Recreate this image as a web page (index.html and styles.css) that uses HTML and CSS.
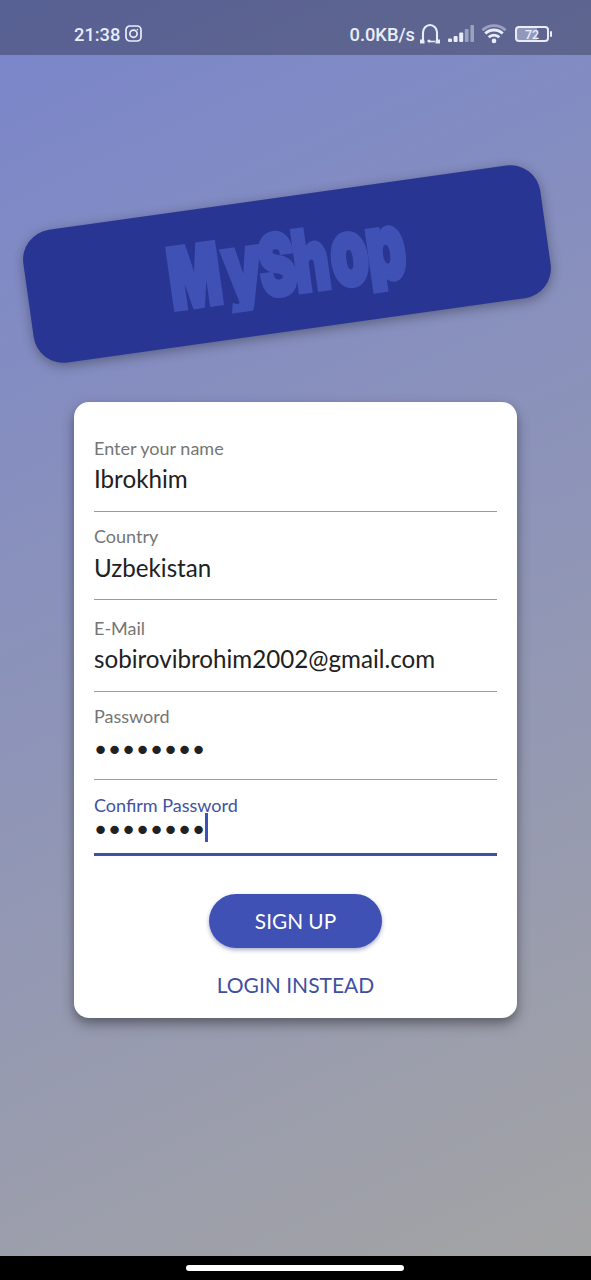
FILE: index.html
```html
<!DOCTYPE html>
<html lang="en">
<head>
<meta charset="utf-8">
<title>MyShop</title>
<link rel="stylesheet" href="styles.css">
</head>
<body>
<div class="screen">
  <header class="status">
    <div class="status-left">
      <span class="clock">21:38</span>
      <svg class="insta" width="17" height="17" viewBox="0 0 17 17" fill="none" stroke="#e9ecfb" stroke-width="1.700"><rect x="1" y="1" width="15" height="15" rx="4"/><circle cx="8.500" cy="8.700" r="3.600"/><circle cx="12.400" cy="4.600" r=".8" fill="#e9ecfb" stroke="none"/></svg>
    </div>
    <div class="status-right">
      <span class="speed">0.0KB/s</span>
      <svg class="phones" width="22" height="22" viewBox="0 0 22 22" fill="none" stroke="#e9ecfb" stroke-width="2.100"><path d="M4 18.500V9.500a7 7.500 0 0 1 14 0V18.500"/><path d="M2.500 16.500v2.500h3M19.500 16.500v2.500h-3" stroke-width="3"/><path d="M10 18.500h6" stroke-width="1.500"/><circle cx="10" cy="18" r="1.600" fill="#e9ecfb" stroke="none"/></svg>
      <svg class="signal" width="27" height="18" viewBox="0 0 27 18" fill="#e9ecfb"><rect x="0" y="13.500" width="4" height="3.500" rx="1"/><rect x="5.600" y="11" width="4" height="6" rx="1"/><rect x="11.200" y="7.500" width="4" height="9.500" rx="1"/><rect x="16.800" y="4" width="3.800" height="13" rx="1" opacity=".45"/><rect x="22.400" y="0" width="3.600" height="17" rx="1" opacity=".45"/></svg>
      <svg class="wifi" width="26" height="20" viewBox="0 0 26 20" fill="none" stroke="#e9ecfb" stroke-width="2.900"><path d="M1.500 6.300a16.500 16.500 0 0 1 23 0" opacity=".45"/><path d="M4.300 9.500a12.500 12.500 0 0 1 17.400 0"/><path d="M7.700 13.200a7.700 7.700 0 0 1 10.600 0"/><circle cx="13" cy="16.900" r="2.300" fill="#e9ecfb" stroke="none"/></svg>
      <div class="battery"><span class="level">72</span></div>
    </div>
  </header>
  <main class="auth">
    <div class="banner">
      <svg class="logo" width="240" height="90" viewBox="0 0 240 90">
        <defs><clipPath id="cut"><rect x="-5" y="0" width="250" height="86.500"/></clipPath></defs>
        <g clip-path="url(#cut)">
          <text class="logo-text" y="74.500" transform="scale(.65 1)"><tspan x="1">M</tspan><tspan x="86.500" class="low">y</tspan><tspan x="141.500">S</tspan><tspan x="194.500">h</tspan><tspan x="252" class="low">o</tspan><tspan x="308" class="low">p</tspan></text>
        </g>
      </svg>
    </div>
    <form class="card">
      <div class="field"><label>Enter your name</label><div class="value">Ibrokhim</div></div>
      <div class="field"><label>Country</label><div class="value">Uzbekistan</div></div>
      <div class="field email"><label>E-Mail</label><div class="value">sobirovibrohim2002@gmail.com</div></div>
      <div class="field"><label>Password</label><div class="value dots">••••••••</div></div>
      <div class="field focused"><label>Confirm Password</label><div class="value dots">••••••••<i class="caret"></i></div></div>
      <button class="submit" type="button">SIGN UP</button>
      <a class="switch">LOGIN INSTEAD</a>
    </form>
  </main>
  <footer class="nav"><div class="pill"></div></footer>
</div>
</body>
</html>
```
FILE: styles.css
```css
* { box-sizing: border-box; }
body { margin: 0; }
.screen {
  width: 591px;
  height: 1280px;
  display: flex;
  flex-direction: column;
  overflow: hidden;
  font-family: Lato, "Noto Sans", sans-serif;
  background: linear-gradient(154.800deg, #7985cb 0%, #a4a4a4 100%);
}
.status {
  height: 55px;
  padding: 14px 39px 0 74px;
  display: flex;
  justify-content: space-between;
  background: rgba(0, 0, 0, .27);
  color: #e9ecfb;
  font: 500 18.300px/41px Roboto, sans-serif;
}
.status-left, .status-right { display: flex; align-items: center; height: 41px; margin-top: -1px; }
.clock, .speed { white-space: nowrap; padding-top: 2px; }
.insta { margin-left: 5px; }
.phones { margin-left: 4px; }
.signal { margin-left: 7px; }
.wifi { margin-left: 6px; }
.battery {
  position: relative;
  display: flex;
  width: 34px;
  height: 16px;
  margin: 0 3px 0 8px;
  border: 2px solid #e9ecfb;
  border-radius: 4px;
  background: linear-gradient(90deg, #9298bb 66%, transparent 66%);
}
.battery::after {
  content: "";
  position: absolute;
  right: -5px;
  top: 3px;
  width: 2px;
  height: 6px;
  border-radius: 1px;
  background: #e9ecfb;
}
.level { flex: 1; text-align: center; font-size: 12.500px; line-height: 13px; }
.auth {
  flex: 1;
  display: flex;
  flex-direction: column;
  align-items: center;
}
.banner {
  width: 522px;
  height: 134px;
  margin: 142px 17px 71px 0;
  border-radius: 30px;
  background: #283593;
  box-shadow: 0 3px 12px rgba(0, 0, 0, .32);
  transform: rotate(-8deg);
  display: flex;
  justify-content: center;
}
.logo { margin-top: 22px; overflow: visible; }
.logo-text {
  font-family: Inter, sans-serif;
  font-weight: 900;
  font-size: 84px;
  fill: #3f51b5;
  stroke: #3f51b5;
  stroke-width: 5px;
}
.low { font-size: 93px; }
.card {
  width: 443px;
  height: 616px;
  padding: 34px 20px 0;
  border-radius: 15px;
  background: #fff;
  box-shadow: 0 6px 14px rgba(0, 0, 0, .32), 0 4px 6px rgba(0, 0, 0, .12);
  display: flex;
  flex-direction: column;
}
.field {
  height: 75.500px;
  margin-bottom: 13px;
  border-bottom: 1.500px solid #9a9a9a;
  display: flex;
  flex-direction: column;
  gap: 6px;
}
.field label { font-size: 18px; line-height: 22px; color: #757575; padding-top: .6px; height: 22px; }
.value { font-size: 24.180px; line-height: 30px; height: 30px; color: #212121; white-space: nowrap; }
.email { margin-top: 3px; }
.dots { font-family: "DejaVu Sans", sans-serif; font-size: 29px; letter-spacing: -3.110px; display: flex; align-items: center; padding-top: 4px; margin-left: -2px; }
.focused { height: 63px; gap: 0; margin-bottom: 38px; border-bottom: 3px solid #3f51a5; }
.focused label { color: #3f51a5; padding-top: 1px; }
.focused .dots { margin-top: -2px; }
.caret { width: 3px; height: 29px; margin: -6px 0 0 1px; background: #3f51b5; flex: none; }
.submit {
  flex: none;
  align-self: center;
  width: 173px;
  height: 54px;
  border: 0;
  padding: 0;
  border-radius: 27px;
  background: #3f51b5;
  color: #fff;
  font: 20.800px/54px Lato, sans-serif;
  box-shadow: 0 2px 4px rgba(40, 50, 110, .4);
}
.switch { align-self: center; margin-top: 24px; font-size: 21px; line-height: 26px; color: #3f4f9f; }
.nav {
  height: 24px;
  background: #000;
  display: flex;
  justify-content: center;
  align-items: center;
}
.pill { width: 218px; height: 6px; margin-right: 1px; border-radius: 3px; background: #fff; }
```
